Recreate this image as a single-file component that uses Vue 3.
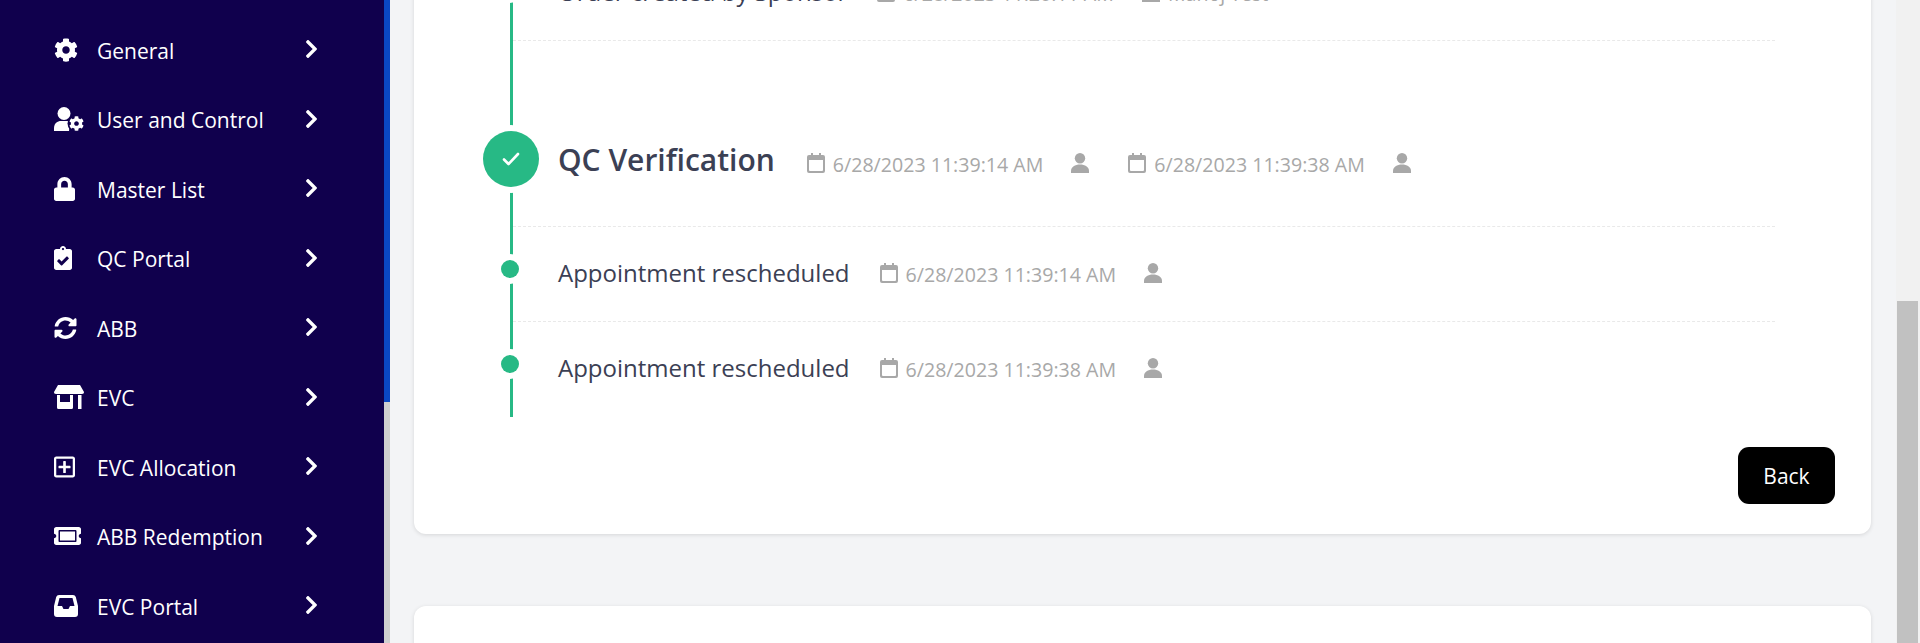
<script setup>
const menu = [
  { label: 'General', icon: 'gear', w: 24, h: 24, box: '0 0 512 512' },
  { label: 'User and Control', icon: 'usergear', w: 30, h: 24, box: '0 0 30 24' },
  { label: 'Master List', icon: 'lock', w: 21, h: 24, box: '0 0 448 512' },
  { label: 'QC Portal', icon: 'clip', w: 18, h: 24, box: '0 0 384 512' },
  { label: 'ABB', icon: 'sync', w: 23, h: 22, box: '8 8 496 496' },
  { label: 'EVC', icon: 'store', w: 30, h: 24, box: '0 0 30 24' },
  { label: 'EVC Allocation', icon: 'plus', w: 21, h: 22, box: '0 32 448 448' },
  { label: 'ABB Redemption', icon: 'ticket', w: 27, h: 18, box: '0 64 576 384' },
  { label: 'EVC Portal', icon: 'inbox', w: 24, h: 22, box: '0 0 24 22' },
]

const paths = {
  gear: 'M487.400 315.700l-42.600-24.600c4.300-23.200 4.300-47 0-70.200l42.600-24.600c4.900-2.800 7.100-8.600 5.500-14-11.100-35.600-30-67.800-54.700-94.600-3.800-4.100-10-5.100-14.800-2.300L380.800 110c-17.900-15.400-38.500-27.300-60.800-35.100V25.800c0-5.600-3.900-10.500-9.400-11.700-36.700-8.200-74.300-7.800-109.200 0-5.500 1.200-9.400 6.100-9.400 11.700V75c-22.200 7.900-42.800 19.800-60.800 35.100L88.700 85.500c-4.900-2.800-11-1.900-14.800 2.300-24.700 26.700-43.600 58.900-54.700 94.600-1.700 5.400.6 11.200 5.500 14L67.300 221c-4.300 23.200-4.300 47 0 70.200l-42.600 24.600c-4.900 2.800-7.100 8.600-5.500 14 11.100 35.600 30 67.800 54.700 94.600 3.800 4.100 10 5.100 14.800 2.300l42.600-24.600c17.900 15.400 38.500 27.300 60.800 35.100v49.200c0 5.600 3.900 10.500 9.400 11.700 36.700 8.200 74.300 7.800 109.200 0 5.500-1.200 9.400-6.100 9.400-11.700v-49.200c22.200-7.900 42.800-19.800 60.800-35.100l42.600 24.600c4.900 2.800 11 1.900 14.800-2.300 24.700-26.700 43.600-58.900 54.700-94.600 1.500-5.500-.7-11.300-5.600-14.100zM256 336c-44.100 0-80-35.900-80-80s35.900-80 80-80 80 35.900 80 80-35.900 80-80 80z',
  lock: 'M400 224h-24v-72C376 68.200 307.800 0 224 0S72 68.200 72 152v72H48c-26.500 0-48 21.500-48 48v192c0 26.500 21.500 48 48 48h352c26.500 0 48-21.500 48-48V272c0-26.500-21.500-48-48-48zm-104 0H152v-72c0-39.700 32.300-72 72-72s72 32.300 72 72v72z',
  clip: 'M336 64h-80c0-35.300-28.700-64-64-64s-64 28.700-64 64H48C21.500 64 0 85.500 0 112v352c0 26.500 21.500 48 48 48h288c26.500 0 48-21.500 48-48V112c0-26.500-21.500-48-48-48zM192 40c13.300 0 24 10.700 24 24s-10.700 24-24 24-24-10.700-24-24 10.700-24 24-24zm121.200 231.800l-143 141.800c-4.700 4.700-12.300 4.600-17-.1l-82.600-83.300c-4.700-4.700-4.600-12.300.1-17L99.100 285c4.700-4.700 12.300-4.600 17 .1l46 46.400 106-105.200c4.700-4.700 12.300-4.600 17 .1l28.200 28.400c4.700 4.800 4.600 12.300-.1 17z',
  sync: 'M370.720 133.280C339.458 104.008 298.888 87.962 255.848 88c-77.458.068-144.328 53.178-162.791 126.850-1.344 5.363-6.122 9.150-11.651 9.150H24.103c-7.498 0-13.194-6.807-11.807-14.176C33.933 94.924 134.813 8 256 8c66.448 0 126.791 26.136 171.315 68.685L463.030 40.970C478.149 25.851 504 36.559 504 57.941V192c0 13.255-10.745 24-24 24H345.941c-21.382 0-32.090-25.851-16.970-40.971l41.749-41.749zM32 296h134.059c21.382 0 32.090 25.851 16.971 40.971l-41.750 41.750c31.262 29.273 71.835 45.319 114.876 45.280 77.418-.070 144.315-53.144 162.787-126.849 1.344-5.363 6.122-9.150 11.651-9.150h57.304c7.498 0 13.194 6.807 11.807 14.176C478.067 417.076 377.187 504 256 504c-66.448 0-126.791-26.136-171.315-68.685L48.970 471.030C33.851 486.149 8 475.441 8 454.059V320c0-13.255 10.745-24 24-24z',
  store: 'M4 0H26L30 7C30 8 29.500 9 28 9H2C.5 9 0 8 0 7zM3 10H6V17H16V10H19V22.500A1.500 1.500 0 0 1 17.500 24H4.500A1.500 1.500 0 0 1 3 22.500zM24 10H27.500V24H24z',
  plus: 'M352 240v32c0 6.600-5.400 12-12 12h-88v88c0 6.600-5.400 12-12 12h-32c-6.600 0-12-5.400-12-12v-88h-88c-6.600 0-12-5.400-12-12v-32c0-6.600 5.400-12 12-12h88v-88c0-6.600 5.400-12 12-12h32c6.600 0 12 5.400 12 12v88h88c6.600 0 12 5.400 12 12zm96-160v352c0 26.500-21.500 48-48 48H48c-26.500 0-48-21.500-48-48V80c0-26.500 21.500-48 48-48h352c26.500 0 48 21.500 48 48zm-48 346V86c0-3.300-2.700-6-6-6H54c-3.300 0-6 2.700-6 6v340c0 3.300 2.700 6 6 6h340c3.300 0 6-2.700 6-6z',
  ticket: 'M128 160h320v192H128V160zm400 96c0 26.510 21.490 48 48 48v96c0 26.510-21.490 48-48 48H48c-26.510 0-48-21.490-48-48v-96c26.510 0 48-21.490 48-48s-21.490-48-48-48v-96c0-26.510 21.490-48 48-48h480c26.510 0 48 21.490 48 48v96c-26.510 0-48 21.490-48 48zm-48-104c0-13.255-10.745-24-24-24H120c-13.255 0-24 10.745-24 24v208c0 13.255 10.745 24 24 24h336c13.255 0 24-10.745 24-24V152z',
  inbox: 'M5 0H19A3 3 0 0 1 21.800 2L24 11V19A3 3 0 0 1 21 22H3A3 3 0 0 1 0 19V11L2.200 2A3 3 0 0 1 5 0zM5.500 3L3.500 11H8L9.500 14H14.500L16 11H20.500L18.500 3z',
}

const chevron = 'M285.476 272.971L91.132 467.314c-9.373 9.373-24.569 9.373-33.941 0l-22.667-22.667c-9.357-9.357-9.375-24.522-.04-33.901L188.505 256 34.484 101.255c-9.335-9.379-9.317-24.544.04-33.901l22.667-22.667c9.373-9.373 24.569-9.373 33.941 0L285.475 239.030c9.373 9.372 9.373 24.568.001 33.941z'

const rows = [
  { title: 'Order created by Sponsor', stamps: [{ date: '6/28/2023 11:20:11 AM', user: 'Manoj Test' }] },
  {
    title: 'QC Verification',
    stage: true,
    stamps: [{ date: '6/28/2023 11:39:14 AM' }, { date: '6/28/2023 11:39:38 AM' }],
  },
  { title: 'Appointment rescheduled', stamps: [{ date: '6/28/2023 11:39:14 AM' }] },
  { title: 'Appointment rescheduled', stamps: [{ date: '6/28/2023 11:39:38 AM' }] },
]
</script>

<template>
  <div class="page">
    <aside class="sidebar">
      <nav class="menu">
        <a v-for="item in menu" :key="item.label" class="menu-item">
          <span class="menu-icon">
            <svg :width="item.w" :height="item.h" :viewBox="item.box">
              <template v-if="item.icon === 'usergear'">
                <circle cx="10" cy="6.500" r="6.500" fill="#fff" />
                <path d="M0 24V21C0 16.500 3.500 14 7 14H13C14 14 15 14.200 16 14.600L15 24z" fill="#fff" />
                <circle cx="22.500" cy="16.500" r="9" fill="#10004d" />
                <path :d="paths.gear" fill="#fff" transform="translate(15 9) scale(.0293)" />
              </template>
              <path v-else :d="paths[item.icon]" fill="#fff" fill-rule="evenodd" />
            </svg>
          </span>
          <span class="menu-label">{{ item.label }}</span>
          <svg class="chevron" width="11" height="18" viewBox="27 37 266 438"><path :d="chevron" fill="#fff" /></svg>
        </a>
      </nav>
      <div class="side-scroll"><div class="side-thumb"></div></div>
    </aside>

    <main class="main">
      <section class="card detail">
        <div class="timeline">
          <div v-for="(row, i) in rows" :key="i" class="row" :class="{ stage: row.stage }">
            <span class="dot">
              <svg v-if="row.stage" width="18" height="14" viewBox="0 0 18 14"><path d="M2 7.500L6.500 12 16 2" fill="none" stroke="#fff" stroke-width="2.600" stroke-linecap="round" stroke-linejoin="round" /></svg>
            </span>
            <div class="row-line">
              <h3 class="title">{{ row.title }}</h3>
              <template v-for="stamp in row.stamps" :key="stamp.date">
                <span class="meta date">
                  <svg width="18" height="20" viewBox="0 0 18 20"><path d="M4 0H6V2H12V0H14V2H16A2 2 0 0 1 18 4V18A2 2 0 0 1 16 20H2A2 2 0 0 1 0 18V4A2 2 0 0 1 2 2H4zM2 7V17A1 1 0 0 0 3 18H15A1 1 0 0 0 16 17V7z" fill="#a8a8a8" fill-rule="evenodd" /></svg>
                  {{ stamp.date }}
                </span>
                <span class="meta user">
                  <svg width="18" height="20" viewBox="0 0 18 20"><circle cx="9" cy="5.200" r="5.200" fill="#a8a8a8" /><path d="M0 20V18C0 14 4 11.500 9 11.500S18 14 18 18V20z" fill="#a8a8a8" /></svg>
                  {{ stamp.user }}
                </span>
              </template>
            </div>
          </div>
        </div>
        <div class="actions">
          <button class="back" type="button">Back</button>
        </div>
      </section>
      <section class="card next"></section>
    </main>

    <div class="page-scroll"><div class="page-thumb"></div></div>
  </div>
</template>

<style>
html, body {
  margin: 0;
  overflow: hidden;
}
</style>

<style scoped>
.page {
  display: flex;
  height: 643px;
  overflow: hidden;
  background: #f3f4f6;
  font-family: "Open Sans", "Liberation Sans", sans-serif;
}
.sidebar {
  display: flex;
  flex: 0 0 390px;
  background: #10004d;
}
.menu {
  flex: 1;
  padding-top: 16px;
}
.menu-item {
  display: flex;
  align-items: center;
  height: 69.5px;
  padding-left: 54px;
  color: #fff;
}
.menu-icon {
  display: flex;
  flex: 0 0 43px;
  align-items: center;
  margin-top: -2px;
}
.menu-label {
  flex: 0 0 209px;
  font-size: 21px;
  white-space: nowrap;
}
.chevron {
  margin-top: -3px;
}
.side-scroll {
  flex: 0 0 6px;
  background: #cfcfcf;
}
.side-thumb {
  height: 402px;
  background: #0a47c2;
}
.main {
  flex: 1;
  padding: 0 25px 0 24px;
}
.card {
  background: #fff;
  border-radius: 12px;
  box-shadow: 0 1px 4px rgba(0, 0, 0, 0.12);
}
.detail {
  display: flex;
  flex-direction: column;
  box-sizing: border-box;
  height: 594px;
  margin-top: -60px;
  padding: 0 96px 0 69px;
}
.next {
  margin-top: 72px;
  height: 100px;
}
.timeline {
  position: relative;
  padding-top: 6px;
}
.timeline::before {
  content: "";
  position: absolute;
  left: 27px;
  top: 0;
  bottom: 0;
  width: 3px;
  background: #27b985;
}
.row {
  position: relative;
  height: 95px;
  box-sizing: border-box;
  margin-left: 30px;
  border-bottom: 1px dashed #e9e9e9;
}
.row:last-child {
  border-bottom: 0;
}
.row.stage {
  height: 186px;
}
.dot {
  position: absolute;
  left: -12px;
  top: 33px;
  width: 18px;
  height: 18px;
  border-radius: 50%;
  background: #27b985;
  box-shadow: 0 0 0 6px #fff;
}
.stage .dot {
  left: -30px;
  top: 90px;
  display: flex;
  align-items: center;
  justify-content: center;
  width: 56px;
  height: 56px;
}
.row-line {
  display: flex;
  align-items: center;
  height: 54px;
  padding: 20px 0 0 45px;
  white-space: nowrap;
}
.stage .row-line {
  padding-top: 96px;
}
.title {
  margin: -3px 0 0;
  font-size: 24px;
  font-weight: 400;
  color: #3b4054;
}
.stage .title {
  margin-top: -10px;
  font-size: 30px;
  font-weight: 600;
}
.meta {
  display: inline-flex;
  align-items: center;
  gap: 8px;
  font-size: 19.6px;
  color: #a8a8a8;
}
.meta svg {
  margin-top: -3px;
}
.date {
  margin-left: 30px;
}
.stage .title + .date {
  margin-left: 32px;
}
.date ~ .date {
  margin-left: 39px;
}
.user {
  margin-left: 28px;
}
.actions {
  display: flex;
  justify-content: flex-end;
  margin: 30px -60px 0 0;
}
.back {
  width: 97px;
  height: 57px;
  border: 0;
  border-radius: 11px;
  background: #000;
  color: #fff;
  font: 500 21px "Open Sans", sans-serif;
}
.page-scroll {
  flex: 0 0 24px;
  background: #f1f1f1;
}
.page-thumb {
  height: 342px;
  margin: 301px 2px 0 1px;
  background: #c1c1c1;
}
</style>
